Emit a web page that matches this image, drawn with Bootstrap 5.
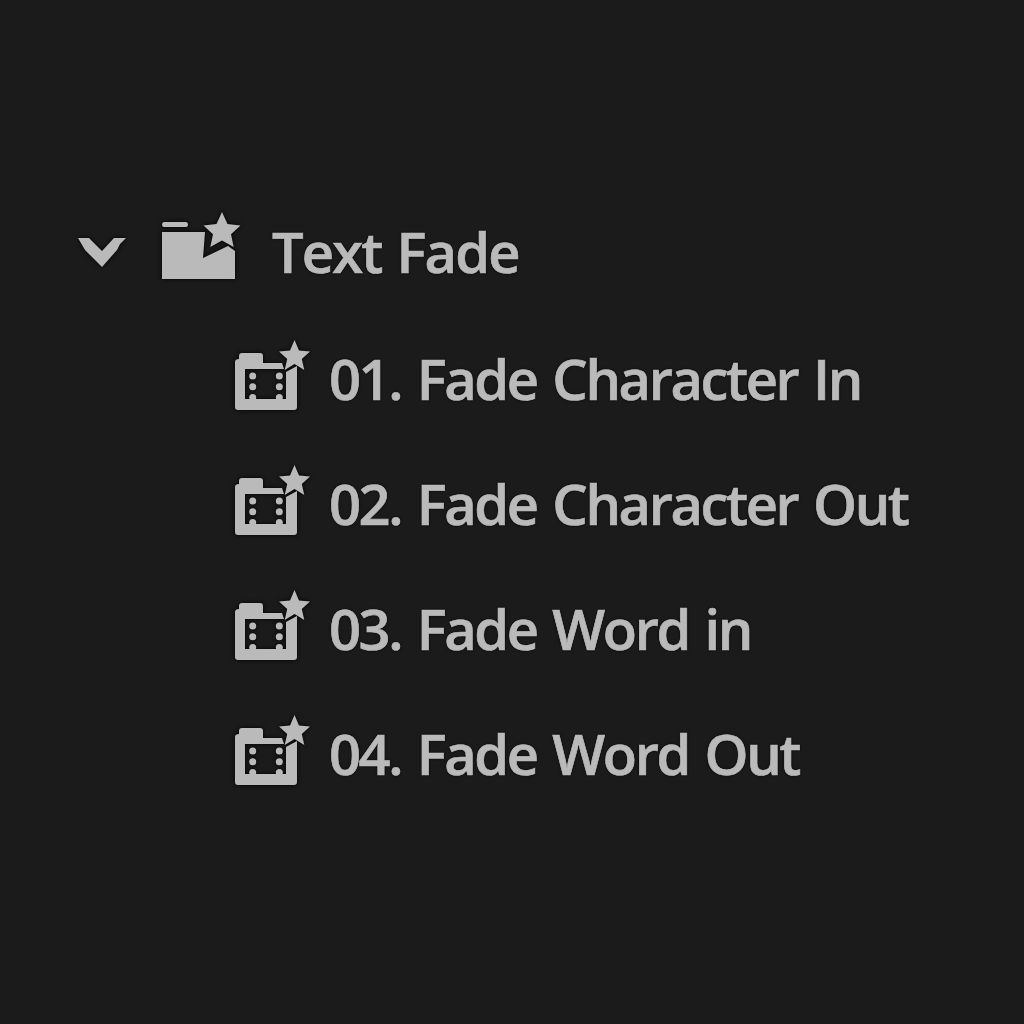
<!DOCTYPE html>
<html lang="en"><head><meta charset="utf-8"><title>Text Fade</title>
<link href="https://cdn.jsdelivr.net/npm/bootstrap@5.3.0/dist/css/bootstrap.min.css" rel="stylesheet">
<style>
html,body{height:100%;}
body{background:#1b1b1b;color:#bababa;font-family:"Open Sans","Noto Sans",sans-serif;}
.tree-wrap{padding:218px 0 0 78px;}
.tree-head{height:70px;}
.chev{width:48px;height:30px;margin-right:36px;filter:drop-shadow(0 0 2px #000);}
.bin{width:80px;height:70px;margin-right:30px;overflow:visible;filter:drop-shadow(0 0 2px #000);}
.head-label{font-size:56px;font-weight:600;letter-spacing:-1.8px;word-spacing:2px;line-height:70px;margin-top:-4px;-webkit-text-stroke:.7px #bababa;text-shadow:0 0 3px #000;}
.tree-kids{margin:0;padding:27px 0 0 156px;list-style:none;}
.tree-kid{height:125px;}
.clip{width:78px;height:80px;margin-right:17px;margin-top:5px;filter:drop-shadow(0 0 2px #000);}
.kid-label{font-size:56px;font-weight:600;letter-spacing:-2.4px;word-spacing:3.5px;line-height:72px;white-space:nowrap;-webkit-text-stroke:.7px #bababa;text-shadow:0 0 3px #000;}
</style></head><body>
<svg width="0" height="0" class="position-absolute"><defs>
<symbol id="clipico" viewBox="0 0 78 80"><path fill="#bababa" d="M1 22q0-3 4-3v-3q0-3 3-3h18q3 0 3 3v7h19l2 6H11v30h41V32l11-6v41q0 3-3 3H4q-3 0-3-3z"/><g fill="#bababa"><circle cx="18.700" cy="36" r="3.500"/><circle cx="18.700" cy="46.700" r="3.500"/><circle cx="18.700" cy="57.500" r="3.500"/><circle cx="45.300" cy="36" r="3.500"/><circle cx="45.300" cy="46.700" r="3.500"/><circle cx="45.300" cy="57.500" r="3.500"/></g><path fill="#bababa" d="M60.500 0l4.500 10.500 11 1-8.200 7.400 2.500 11-9.800-5.800-9.800 5.800 2.500-11-8.200-7.400 11-1z"/></symbol>
</defs></svg>
<div class="tree-wrap">
<div class="tree-head d-flex align-items-center">
<svg class="chev" viewBox="0 0 48 30"><path fill="#bababa" d="M0 0h11l13 13L36 0h12l-6 6-3 6-15 17L7 12z"/></svg>
<svg class="bin" viewBox="0 0 80 70"><path fill="#bababa" d="M2 4h22q2 0 2 2.500T24 9H2q-2 0-2-2.500T2 4zM0 14h43l-2 26 25-12 7 5v28H0z"/><path fill="#bababa" d="M60 -6l5.500 12 13 1.500-9.500 8.700 2.700 12.800-11.700-6.500-11.700 6.500 2.700-12.800-9.500-8.700 13-1.500z"/></svg>
<span class="head-label">Text Fade</span>
</div>
<ul class="tree-kids">
<li class="tree-kid d-flex align-items-center"><svg class="clip"><use href="#clipico"/></svg><span class="kid-label">01. Fade Character In</span></li>
<li class="tree-kid d-flex align-items-center"><svg class="clip"><use href="#clipico"/></svg><span class="kid-label">02. Fade Character Out</span></li>
<li class="tree-kid d-flex align-items-center"><svg class="clip"><use href="#clipico"/></svg><span class="kid-label">03. Fade Word in</span></li>
<li class="tree-kid d-flex align-items-center"><svg class="clip"><use href="#clipico"/></svg><span class="kid-label">04. Fade Word Out</span></li>
</ul>
</div>
</body></html>
